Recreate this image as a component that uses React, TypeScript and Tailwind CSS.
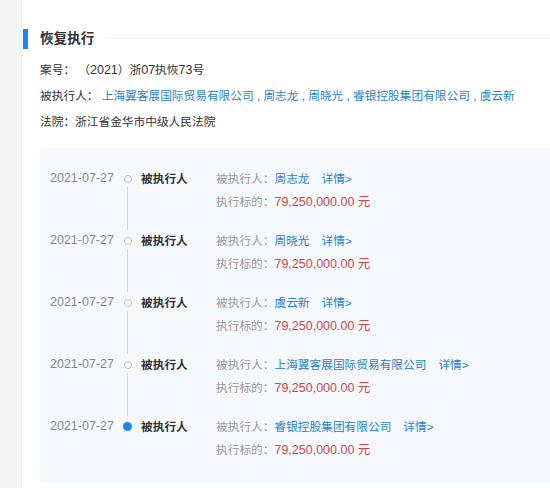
import React from "react";

const font = { fontFamily: '"Liberation Sans", "Noto Sans CJK SC", sans-serif' };

const rows = [
  { name: "周志龙", last: false },
  { name: "周晓光", last: false },
  { name: "虞云新", last: false },
  { name: "上海翼客展国际贸易有限公司", last: false },
  { name: "睿银控股集团有限公司", last: true },
];

export default function App() {
  return (
    <div
      className="w-[550px] h-[488px] flex bg-white overflow-hidden text-[11.7px] text-[#333]"
      style={font}
    >
      <div className="w-[22px] shrink-0 bg-[#f4f4f4] border-r border-[#ececec]" />
      <div className="flex-1 flex flex-col min-w-0">
        <div className="mt-[29px] h-[20px] flex items-center">
          <div className="ml-[1px] w-[5px] h-[20px] bg-[#1e88e5]" />
          <div className="ml-[12px] text-[13.6px] font-bold text-[#333] leading-[20px]">恢复执行</div>
          <div className="ml-[13px] flex-1 h-px bg-[#eeeeee] -mt-[2px]" />
        </div>
        <div className="mt-[8px] pl-[18px] leading-[26px]">
          <div className="whitespace-nowrap">
            案号：&nbsp;（<span className="text-[12.5px]">2021</span>）浙<span className="text-[12.5px]">07</span>执恢<span className="text-[12.5px]">73</span>号
          </div>
          <div className="whitespace-nowrap">
            被执行人：&nbsp;
            <span className="text-[#2b82c9]">上海翼客展国际贸易有限公司</span>
            <span className="text-[#555]"> , </span>
            <span className="text-[#2b82c9]">周志龙</span>
            <span className="text-[#555]"> , </span>
            <span className="text-[#2b82c9]">周晓光</span>
            <span className="text-[#555]"> , </span>
            <span className="text-[#2b82c9]">睿银控股集团有限公司</span>
            <span className="text-[#555]"> , </span>
            <span className="text-[#2b82c9]">虞云新</span>
          </div>
          <div className="whitespace-nowrap">法院：浙江省金华市中级人民法院</div>
        </div>
        <div className="mt-[13px] ml-[18px] bg-[#f5f9fd] pt-[19px] pb-[6px] pl-[10px]">
          {rows.map((r, i) => (
            <div key={i} className="relative flex h-[62px] leading-[23px]">
              <div className="w-[70px] shrink-0 text-[12.5px] text-[#888] whitespace-nowrap">2021-07-27</div>
              <div className="relative w-[15px] shrink-0 flex justify-center">
                {r.last ? (
                  <div className="mt-[7px] w-[9px] h-[9px] rounded-full bg-[#1e88e5]" />
                ) : (
                  <div className="mt-[7.5px] w-[8px] h-[8px] rounded-full border border-[#bdbdbd] bg-white" />
                )}
                {!r.last && (
                  <div className="absolute left-[7px] top-[20px] w-px h-[43px] bg-[#d6d6d6]" />
                )}
              </div>
              <div className="ml-[6px] w-[75px] shrink-0 font-bold text-[#333] whitespace-nowrap">被执行人</div>
              <div className="flex flex-col whitespace-nowrap">
                <div>
                  <span className="text-[#999]">被执行人：</span>
                  <span className="text-[#2b82c9]">{r.name}</span>
                  <span className="ml-[12px] text-[#2b82c9]">详情&gt;</span>
                </div>
                <div>
                  <span className="text-[#999]">执行标的：</span>
                  <span className="text-[12.5px] text-[#d0464f]">79,250,000.00 元</span>
                </div>
              </div>
            </div>
          ))}
        </div>
      </div>
    </div>
  );
}
